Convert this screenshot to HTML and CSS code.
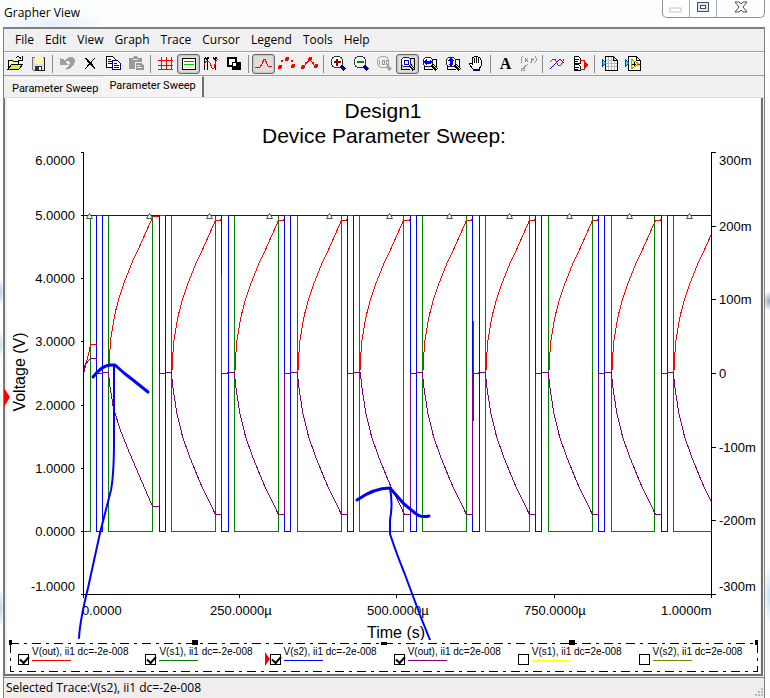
FILE: index.html
```html
<!DOCTYPE html>
<html lang="en">
<head>
  <meta charset="UTF-8">
  <meta name="viewport" content="width=device-width, initial-scale=1.0">
  <title>Grapher View</title>
  <link rel="stylesheet" href="styles.css">
</head>
<body>

  <!-- Title bar -->
  <header class="title-bar">
    <h1>Grapher View</h1>
    <div class="window-buttons">
      <button class="minimize" aria-label="Minimize" disabled>
        <svg width="14" height="14"><rect x="1" y="8" width="11" height="4" fill="#fff" stroke="#c4c4c4"/></svg>
      </button>
      <button class="maximize" aria-label="Maximize">
        <svg width="14" height="14" shape-rendering="crispEdges"><rect x="1" y="2" width="12" height="10" fill="#4a4f60"/><rect x="2" y="3" width="10" height="8" fill="#dfe2e8"/><rect x="4" y="5" width="6" height="4" fill="#4a4f60"/><rect x="5" y="6" width="4" height="2" fill="#fff"/></svg>
      </button>
      <button class="close" aria-label="Close">
        <svg width="14" height="14"><path d="M1 2h4l2 2 2-2h4L9 7l4 5H9L7 10l-2 2H1l4-5z" fill="#fff" stroke="#4a4f60"/></svg>
      </button>
    </div>
  </header>

  <div class="window">
    <!-- Menu -->
    <nav class="menu">
      <a href="#">File</a>
      <a href="#">Edit</a>
      <a href="#">View</a>
      <a href="#">Graph</a>
      <a href="#">Trace</a>
      <a href="#">Cursor</a>
      <a href="#">Legend</a>
      <a href="#">Tools</a>
      <a href="#">Help</a>
    </nav>

    <!-- Toolbar -->
    <div class="toolbar">
      <button aria-label="Open"><svg viewBox="0 0 17 17"><path d="M1 14V6l1-1h3l1 1h5v3" fill="#ffff9c" stroke="#000"/><path d="M1 14l4-5h11l-4 5z" fill="#e6e640" stroke="#000"/><path d="M9 3c1-2 4-2 5 1M15 1v4h-4" fill="none" stroke="#000"/></svg></button>
      <button aria-label="Save"><svg viewBox="0 0 17 17"><path d="M2 2h12v13H3l-1-1z" fill="#e0e0e0" stroke="#777"/><path d="M5 2h8v7H5z" fill="#ffff70"/><path d="M6 3h1m2 0h1m2 0h1M7 5h1m2 0h1M6 7h1m2 0h1m2 0h1" stroke="#fff"/><path d="M5 11h7v4H5z" fill="#333"/><path d="M9 12h2v3H9z" fill="#fff"/><path d="M14 3v12H5" fill="none" stroke="#222"/></svg></button>
      <span class="separator"></span>
      <button aria-label="Undo" disabled><svg viewBox="0 0 17 17"><path d="M1 3v7h8L6 7c2-2 5-1 5 1s-2 4-5 6l1 1c6-2 9-5 9-9s-5-6-10-1z" fill="#a0a0a0"/></svg></button>
      <button aria-label="Cut"><svg viewBox="0 0 17 17"><path d="M3 3l10 11M4 3l9 10M13 3L3 14" fill="none" stroke="#000"/></svg></button>
      <button aria-label="Copy"><svg viewBox="0 0 17 17"><path d="M1 1h6l3 3v8H1z" fill="#fff" stroke="#000"/><path d="M3 4h3M3 6h4M3 8h4" stroke="#000080"/><path d="M7 5h5l3 3v6H7z" fill="#fff" stroke="#000080"/><path d="M9 8h3M9 10h5M9 12h5" stroke="#000080"/></svg></button>
      <button aria-label="Paste" disabled><svg viewBox="0 0 17 17"><path d="M1 3h4l1-2h3l1 2h4v4H7v7H1z" fill="#999"/><path d="M5 4h5" stroke="#eee"/><path d="M8 8h5l3 3v4H8z" fill="#999"/><path d="M9 10h3M9 12h5" stroke="#eee"/></svg></button>
      <span class="separator"></span>
      <button aria-label="Show grid"><svg viewBox="0 0 17 17"><path d="M4 2v13M9 2v13M14 2v13M1 5h15M1 10h15M1 14h15" stroke="#f00"/></svg></button>
      <button class="pressed" aria-label="Show legend"><svg viewBox="0 0 17 17"><path d="M2 3h13v11H2z" fill="#ffffe8" stroke="#000"/><path d="M4 6h10" stroke="#f00"/><path d="M4 9h10" stroke="#0c0"/><path d="M4 12h10" stroke="#ff0"/></svg></button>
      <button aria-label="Show cursors"><svg viewBox="0 0 17 17"><path d="M4 2v13M12 2v13M2 2l2 3 2-3M10 2l2 3 2-3M1 3v12" fill="none" stroke="#000"/><path d="M1 10l2-4h2l2 2 2 5h2l2-7 2-2" fill="none" stroke="#f00"/></svg></button>
      <button aria-label="Black and white"><svg viewBox="0 0 17 17"><path d="M2 3h8v8H2z" fill="#fff" stroke="#000" stroke-width="2"/><path d="M6 7h9v8H6z"/><path d="M6 7h4v4H6z" fill="#fff" stroke="#000"/></svg></button>
      <span class="separator"></span>
      <button class="pressed" aria-label="Lines"><svg viewBox="0 0 17 17"><path d="M0 12h5l2-3 2-5h1l2 5 1 2 4 1" fill="none" stroke="#f00"/></svg></button>
      <button aria-label="Points"><svg viewBox="0 0 17 17"><g fill="#f00"><circle cx="2" cy="12" r="2"/><circle cx="4" cy="6" r="1"/><circle cx="9" cy="4" r="2"/><circle cx="14" cy="6" r="1"/><circle cx="15" cy="11" r="2"/></g></svg></button>
      <button aria-label="Lines and points"><svg viewBox="0 0 17 17"><path d="M2 12l3-3 4-5 3 5 3 3" fill="none" stroke="#f00"/><g fill="#f00"><circle cx="2" cy="12" r="2"/><circle cx="9" cy="4" r="2"/><circle cx="12" cy="8" r="1"/><circle cx="15" cy="11" r="2"/><circle cx="5" cy="8" r="1"/></g></svg></button>
      <span class="separator"></span>
      <button aria-label="Zoom in"><svg viewBox="0 0 17 17"><circle cx="7" cy="7" r="6" fill="#fff" stroke="#333"/><path d="M11 11l4 4" stroke="#000080" stroke-width="3"/><path d="M4 7h7M7 4v7" stroke="#900000" stroke-width="2"/></svg></button>
      <button aria-label="Zoom out"><svg viewBox="0 0 17 17"><circle cx="7" cy="7" r="6" fill="#fff" stroke="#333"/><path d="M11 11l4 4" stroke="#000080" stroke-width="3"/><path d="M4 7h7" stroke="#008000" stroke-width="2"/></svg></button>
      <button aria-label="Zoom 100%" disabled><svg viewBox="0 0 17 17"><circle cx="7" cy="7" r="6" fill="none" stroke="#aaa"/><path d="M11 11l4 4" stroke="#aaa" stroke-width="3"/><path d="M3 5v5M6 5h2v4H6zM10 5h2v4h-2z" fill="none" stroke="#999"/></svg></button>
      <button class="pressed" aria-label="Zoom area"><svg viewBox="0 0 17 17"><path d="M2 9v5h9M8 3h7v11" fill="none" stroke="#000"/><circle cx="7" cy="7" r="5" fill="#fff" stroke="#222"/><path d="M11 10l4 5" stroke="#000" stroke-width="3"/><path d="M11 10l4 4" stroke="#ff0"/><path d="M5 5h4v4H5z" fill="none" stroke="#00f"/></svg></button>
      <button aria-label="Zoom horizontal"><svg viewBox="0 0 17 17"><path d="M2 9v5h9M8 4h6v9" fill="none" stroke="#000"/><circle cx="6" cy="7" r="5" fill="#fff" stroke="#222"/><path d="M10 10l5 5" stroke="#000" stroke-width="3"/><path d="M11 10l4 4" stroke="#ff0"/><path d="M2 7l2-2v1h4V5l2 2-2 2V8H4v1z" fill="#00f" stroke="#00f"/></svg></button>
      <button aria-label="Zoom vertical"><svg viewBox="0 0 17 17"><path d="M2 9v5h9M8 4h6v9" fill="none" stroke="#000"/><circle cx="6" cy="7" r="5" fill="#fff" stroke="#222"/><path d="M10 10l5 5" stroke="#000" stroke-width="3"/><path d="M11 10l4 4" stroke="#ff0"/><path d="M6 3l2 2H7v4h1l-2 2-2-2h1V5H4z" fill="#00f" stroke="#00f"/></svg></button>
      <button aria-label="Pan"><svg viewBox="0 0 17 17"><path d="M5 14l-4-5 1-1 2 1V3l2-1 1-1h2l1 1 2 1 1 2v6l-2 3z" fill="#fff" stroke="#000"/><path d="M6 3v5M8 2v6M10 3v5" stroke="#000"/><path d="M5 15h7" stroke="#000080" stroke-width="2"/></svg></button>
      <span class="separator"></span>
      <button class="text-tool" aria-label="Add text">A</button>
      <button aria-label="Add data label" disabled><svg viewBox="0 0 17 17"><path d="M3 1L1 3v4l1 1M5 3l3 4M8 3L5 7M10 7v1M11 3l1 3 2-3M12 6l-1 2M15 1l1 2v3l-2 2M8 9l-6 5M1 13h3v2H1z" fill="none" stroke="#999"/></svg></button>
      <span class="separator"></span>
      <button aria-label="Overlay traces"><svg viewBox="0 0 17 17"><path d="M1 14L11 4l4 4" fill="none" stroke="#00f"/><path d="M1 7l3-3h2l3 6h3l3-6" fill="none" stroke="#f00"/></svg></button>
      <button aria-label="Export"><svg viewBox="0 0 17 17"><path d="M2 1h4l2 2v5H2zM2 9h4l2 2v4H2zM3 4h4M3 6h3M3 12h4M3 14h3" fill="#fff" stroke="#000"/><path d="M8 5h4v9H8M12 10h4" fill="none" stroke="#f00"/><path d="M13 7l3 3-3 3z" fill="#f00"/></svg></button>
      <span class="separator"></span>
      <button aria-label="Export to spreadsheet"><svg viewBox="0 0 17 17"><path d="M4 1h8l4 4v10H4z" fill="#fff"/><path d="M7 2v13M10 2v13M13 4v11M4 5h12M4 8h12M4 11h12" stroke="#b8b8b8"/><path d="M4 1h8l4 4v10H4zM12 1v4h4" fill="none" stroke="#000"/><path d="M1 4l4 4-4 4z" fill="#0ff" stroke="#0040c0"/></svg></button>
      <button aria-label="Export to instrument file"><svg viewBox="0 0 17 17"><path d="M4 1h8l4 4v10H4z" fill="#fff" stroke="#000"/><path d="M12 1v4h4" fill="none" stroke="#000"/><path d="M1 4l4 4-4 4z" fill="#0ff" stroke="#0040c0"/><path d="M7 4l8 5-8 5z" fill="#ff0" stroke="#b0a000"/><path d="M8 9h4M10 7v4" stroke="#000"/><path d="M14 9h2" stroke="#f00"/></svg></button>
    </div>

    <!-- Tabs -->
    <div class="tabs">
      <button>Parameter Sweep</button>
      <button class="active">Parameter Sweep</button>
    </div>

    <main class="pane">
      <svg class="chart" viewBox="7 98 753 542" role="img" aria-label="Device Parameter Sweep">
        <defs>
          <!-- one charging and one discharging edge, repeated each period -->
          <path id="charge" d="M1 -5v-8l1 -18l2 -13l3 -16l4 -15l5 -15l8 -20l8 -17l12 -27"/>
          <path id="discharge" d="M0 0l1 12l4 27l6 25l7 20l11 27l15 31h6v-141h6v-1h6"/>
          <path id="marker" d="M-3 2h6l-3 -5z"/>
          <clipPath id="plot"><rect x="83" y="150" width="628" height="445"/></clipPath>
        </defs>

        <text class="chart-title" x="383" y="118">Design1</text>
        <text class="chart-title" x="384" y="143">Device Parameter Sweep:</text>

        <g class="lines" transform="translate(.5 .5)">
          <!-- V(s1) -->
          <path class="green" d="M83 531H90V215H108V531H152V215H171V531H215V215H234V531H278V215H297V531H341V215H359V531H403V215H422V531H466V215H485V531H529V215H548V531H592V215H611V531H654V215H673V531H711"/>
          <!-- V(s2) -->
          <path class="blue" d="M83 215H96V531H102V215H159V531H165V215H221V531H228V215H284V531H290V215H347V531H353V215H410V531H416V215H472V531H479V215H535V531H541V215H598V531H604V215H661V531H667V215H711"/>
          <!-- V(out), both sweeps -->
          <g class="red" clip-path="url(#plot)">
            <path d="M83 373L86 362L89 349L90 344H96M152 217L153 216H158M221 275V376M473 320V373"/>
            <path d="M215 220H219L221 219M278 220H282L284 219M341 220H345L347 219M403 220H408L410 219M466 220H470L472 219M529 220H533L535 219M592 220H596L598 219M654 220H659L661 219"/>
            <use href="#charge" x="108" y="371"/>
            <use href="#charge" x="171" y="374"/>
            <use href="#charge" x="234" y="374"/>
            <use href="#charge" x="297" y="374"/>
            <use href="#charge" x="359" y="374"/>
            <use href="#charge" x="422" y="374"/>
            <use href="#charge" x="485" y="374"/>
            <use href="#charge" x="548" y="374"/>
            <use href="#charge" x="611" y="374"/>
            <use href="#charge" x="673" y="374"/>
          </g>
          <g class="purple" clip-path="url(#plot)">
            <path d="M83 373L84 365L88 360L90 358H96V373H102V372H108L109 383L113 408L120 430L128 450L140 478L152 506H159V373H165V372H171M473 373V420"/>
            <use href="#discharge" x="171" y="372"/>
            <use href="#discharge" x="234" y="372"/>
            <use href="#discharge" x="297" y="372"/>
            <use href="#discharge" x="360" y="372"/>
            <use href="#discharge" x="422" y="372"/>
            <use href="#discharge" x="485" y="372"/>
            <use href="#discharge" x="548" y="372"/>
            <use href="#discharge" x="611" y="372"/>
            <use href="#discharge" x="673" y="372"/>
          </g>
          <path class="blue" d="M96 359V531"/>

          <!-- Axes -->
          <path class="axis" d="M80 152H83V594M80 215H83M80 278H83M80 341H83M80 405H83M80 468H83M80 531H83M80 594H715M711 594V152H715M711 226H715M711 299H715M711 373H715M711 447H715M711 520H715M83 594V597M239 594V597M396 594V597M554 594V597M711 594V597"/>
        </g>

        <g class="markers" transform="translate(.5 .5)">
          <use href="#marker" x="89" y="216"/>
          <use href="#marker" x="149" y="216"/>
          <use href="#marker" x="209" y="216"/>
          <use href="#marker" x="269" y="216"/>
          <use href="#marker" x="329" y="216"/>
          <use href="#marker" x="389" y="216"/>
          <use href="#marker" x="449" y="216"/>
          <use href="#marker" x="509" y="216"/>
          <use href="#marker" x="569" y="216"/>
          <use href="#marker" x="629" y="216"/>
          <use href="#marker" x="689" y="216"/>
        </g>

        <g class="labels labels-left">
          <text x="75" y="165">6.0000</text>
          <text x="75" y="220">5.0000</text>
          <text x="75" y="283">4.0000</text>
          <text x="75" y="346">3.0000</text>
          <text x="75" y="410">2.0000</text>
          <text x="75" y="473">1.0000</text>
          <text x="75" y="536">0.0000</text>
          <text x="75" y="591">-1.0000</text>
        </g>
        <g class="labels">
          <text x="719" y="165">300m</text>
          <text x="719" y="231">200m</text>
          <text x="719" y="304">100m</text>
          <text x="719" y="378">0</text>
          <text x="719" y="452">-100m</text>
          <text x="719" y="525">-200m</text>
          <text x="719" y="591">-300m</text>
        </g>
        <g class="labels">
          <text x="82" y="615">0.0000</text>
          <text x="210" y="615">250.0000µ</text>
          <text x="367" y="615">500.0000µ</text>
          <text x="524" y="615">750.0000µ</text>
          <text x="661" y="615">1.0000m</text>
        </g>
        <text class="axis-title" x="396" y="638">Time (s)</text>
        <text class="axis-title" transform="translate(25 372) rotate(-90)">Voltage (V)</text>
        <path d="M4 388v19l6 -10z" fill="#f00"/>

        <!-- Pen annotations -->
        <g class="pen">
          <path class="thick" d="M93 377Q103 364 112 365H115L124 373L133 380L148 392"/>
          <path d="M114 366V440Q114 474 111 490L100 533L88 588Q80 620 79 638"/>
          <path class="thick" d="M357 500Q374 488 390 488L404 504L415 513Q420 518 429 516"/>
          <path d="M390 488Q393 504 390 520V534Q397 555 404 572L420 615L430 640"/>
        </g>
      </svg>

      <!-- Legend -->
      <div class="legend">
        <svg class="legend-frame" aria-hidden="true">
          <rect width="100%" height="100%"/>
        </svg>
        <i class="handle handle-start"></i>
        <i class="handle handle-quarter"></i>
        <i class="handle handle-half"></i>
        <i class="handle handle-three"></i>
        <i class="handle handle-end"></i>
        <label><input type="checkbox" checked><span class="trace trace-red">V(out), ii1 dc=-2e-008</span></label>
        <label><input type="checkbox" checked><span class="trace trace-green">V(s1), ii1 dc=-2e-008</span></label>
        <label class="selected"><input type="checkbox" checked><span class="trace trace-blue">V(s2), ii1 dc=-2e-008</span></label>
        <label><input type="checkbox" checked><span class="trace trace-purple">V(out), ii1 dc=2e-008</span></label>
        <label><input type="checkbox"><span class="trace trace-yellow">V(s1), ii1 dc=2e-008</span></label>
        <label><input type="checkbox"><span class="trace trace-olive">V(s2), ii1 dc=2e-008</span></label>
      </div>
    </main>

    <footer class="status-bar">
      <span>Selected Trace:V(s2), ii1 dc=-2e-008</span>
      <svg width="10" height="10" aria-hidden="true"><path d="M7 0h2v2H7zM4 3h2v2H4zM7 3h2v2H7zM1 6h2v2H1zM4 6h2v2H4zM7 6h2v2H7z" fill="#b8b8b8"/></svg>
    </footer>
  </div>

</body>
</html>
```
FILE: styles.css
```css
* {
  box-sizing: border-box;
}

body {
  margin: 0;
  font-family: "Open Sans", "Noto Sans", sans-serif;
  font-size: 12px;
  color: #000;
  background:
    radial-gradient(ellipse 6px 14px at 0 292px, #b9d0e6, transparent),
    radial-gradient(ellipse 6px 14px at 0 345px, #c9dcec, transparent),
    radial-gradient(ellipse 6px 20px at 0 608px, #c3d3e6, transparent),
    radial-gradient(ellipse 8px 10px at 100% 301px, #8fa4bd, transparent),
    radial-gradient(ellipse 8px 30px at 100% 595px, #c5e3f7, transparent),
    #fdfefe;
}

button {
  margin: 0;
  padding: 0;
  border: 0;
  background: none;
  font: inherit;
  color: inherit;
}

/* Title bar */
.title-bar {
  display: flex;
  justify-content: space-between;
  height: 27px;
  padding: 0 5px 0 4px;
  background: radial-gradient(ellipse 60px 14px at 50px 24px, #e4eff9, transparent);
}

.title-bar h1 {
  margin: 0;
  font-size: 12px;
  font-weight: normal;
  line-height: 26px;
}

.window-buttons {
  display: flex;
  height: 18px;
  border: 1px solid #8e9296;
  border-top: 0;
  border-radius: 0 0 5px 5px;
}

.window-buttons button {
  width: 27px;
  border-right: 1px solid #a8acb0;
}

.window-buttons .close {
  width: 47px;
  border-right: 0;
}

/* Window */
.window {
  margin: 0 5px 0 3px;
  border: 1px solid #808080;
  border-top-width: 2px;
  background: #f0f0f0;
}

.menu {
  display: flex;
  gap: 11px;
  height: 23px;
  padding-left: 11px;
  border-bottom: 1px solid #a0a0a0;
  line-height: 22px;
}

.menu a {
  color: #000;
  text-decoration: none;
}

.toolbar {
  display: flex;
  align-items: center;
  height: 24px;
  border-top: 1px solid #fff;
  border-bottom: 1px solid #a0a0a0;
}

.toolbar button {
  display: flex;
  align-items: center;
  justify-content: center;
  width: 23px;
  height: 20px;
}

.toolbar svg {
  width: 17px;
  height: 17px;
  margin-bottom: 1px;
  shape-rendering: crispEdges;
}

.toolbar .pressed {
  border: 1px solid #6a6a6a;
  border-radius: 3px;
  background: #dedede;
  box-shadow: inset 0 0 2px #888;
}

.toolbar .text-tool {
  font: bold 16px "Liberation Serif", serif;
}

.separator {
  width: 1px;
  height: 18px;
  margin: 0 3px 0 2px;
  background: #8c8c8c;
}

/* Tabs */
.tabs {
  display: flex;
  align-items: flex-end;
  height: 22px;
  padding-left: 4px;
  border-bottom: 1px solid #dcdcdc;
  font-family: Roboto, sans-serif;
  font-size: 11px;
}

.tabs button {
  height: 19px;
  padding: 0 4px;
  border-top: 1px solid #fff;
  border-right: 1px solid #fff;
  white-space: nowrap;
}

.tabs .active {
  height: 21px;
  padding: 0 6px 3px;
  border-right: 2px solid #707070;
  background: #f4f4f4;
}

.pane {
  margin-right: 1px;
  padding: 0 1px 1px 2px;
  border: solid #707070;
  border-width: 0 2px 2px 1px;
}

/* Chart */
.chart {
  display: block;
  width: 100%;
  background: #fff;
  overflow: visible;
  font-family: "Liberation Sans", Arial, sans-serif;
}

.chart-title {
  font-size: 21px;
  text-anchor: middle;
}

.axis-title {
  font-size: 16px;
  text-anchor: middle;
}

.labels {
  font-size: 13px;
}

.labels-left {
  text-anchor: end;
}

.lines {
  fill: none;
  stroke-width: 1;
  shape-rendering: crispEdges;
}

.green { stroke: #008000; }
.blue { stroke: #0000ff; }
.red { stroke: #ff0000; }
.purple { stroke: #800080; }
.axis { stroke: #000; }

.markers {
  fill: #fff;
  stroke: #555;
}

.pen {
  fill: none;
  stroke: #0000ff;
  stroke-width: 2;
  stroke-linecap: round;
  stroke-linejoin: round;
}

.pen .thick {
  stroke-width: 3;
}

/* Legend */
.legend {
  position: relative;
  display: flex;
  gap: 17px;
  height: 33px;
  padding: 6px 11px 0;
  background: #fff;
  font-family: "Liberation Sans", Arial, sans-serif;
  font-size: 10px;
}

.legend-frame {
  position: absolute;
  top: 3px;
  left: 3px;
  width: calc(100% - 6px);
  height: 28px;
  overflow: visible;
}

.legend-frame rect {
  fill: none;
  stroke: #000;
  stroke-dasharray: 9 5 3 5;
  shape-rendering: crispEdges;
}

.handle {
  position: absolute;
  top: 0;
  width: 6px;
  height: 5px;
  margin-left: -3px;
  background: #000;
}

.handle-start { left: 5px; width: 3px; }
.handle-quarter { left: 25%; }
.handle-half { left: 50%; top: 2px; height: 3px; }
.handle-three { left: 75%; }
.handle-end { right: 2px; width: 3px; }

.legend label {
  position: relative;
  display: flex;
  gap: 3px;
  white-space: nowrap;
}

.legend input {
  appearance: none;
  flex: none;
  width: 11px;
  height: 11px;
  margin: 8px 0 0;
  border: 1px solid #000;
  background: #fff;
}

.legend input:checked::before {
  content: "";
  display: block;
  width: 7px;
  height: 4px;
  margin: 1px 0 0 1px;
  border: solid #000;
  border-width: 0 0 2px 2px;
  transform: rotate(-48deg);
}

.legend .selected::before {
  content: "";
  position: absolute;
  top: 6px;
  left: -5px;
  border: solid transparent;
  border-width: 7px 0 7px 5px;
  border-left-color: #f00;
}

.trace {
  line-height: 12px;
}

.trace::after {
  content: "";
  display: block;
  width: 39px;
  height: 1px;
  margin-top: 2px;
  background: currentColor;
}

.trace-red::after { background: #ff0000; }
.trace-green::after { background: #008000; }
.trace-blue::after { background: #0000ff; }
.trace-purple::after { background: #800080; }
.trace-yellow::after { background: #ffff00; }
.trace-olive::after { background: #808000; }

.status-bar {
  display: flex;
  align-items: flex-end;
  justify-content: space-between;
  height: 21px;
  margin-top: 1px;
  padding-left: 2px;
  border-top: 1px solid #808080;
  background: #f0edec;
  line-height: 20px;
}
```
